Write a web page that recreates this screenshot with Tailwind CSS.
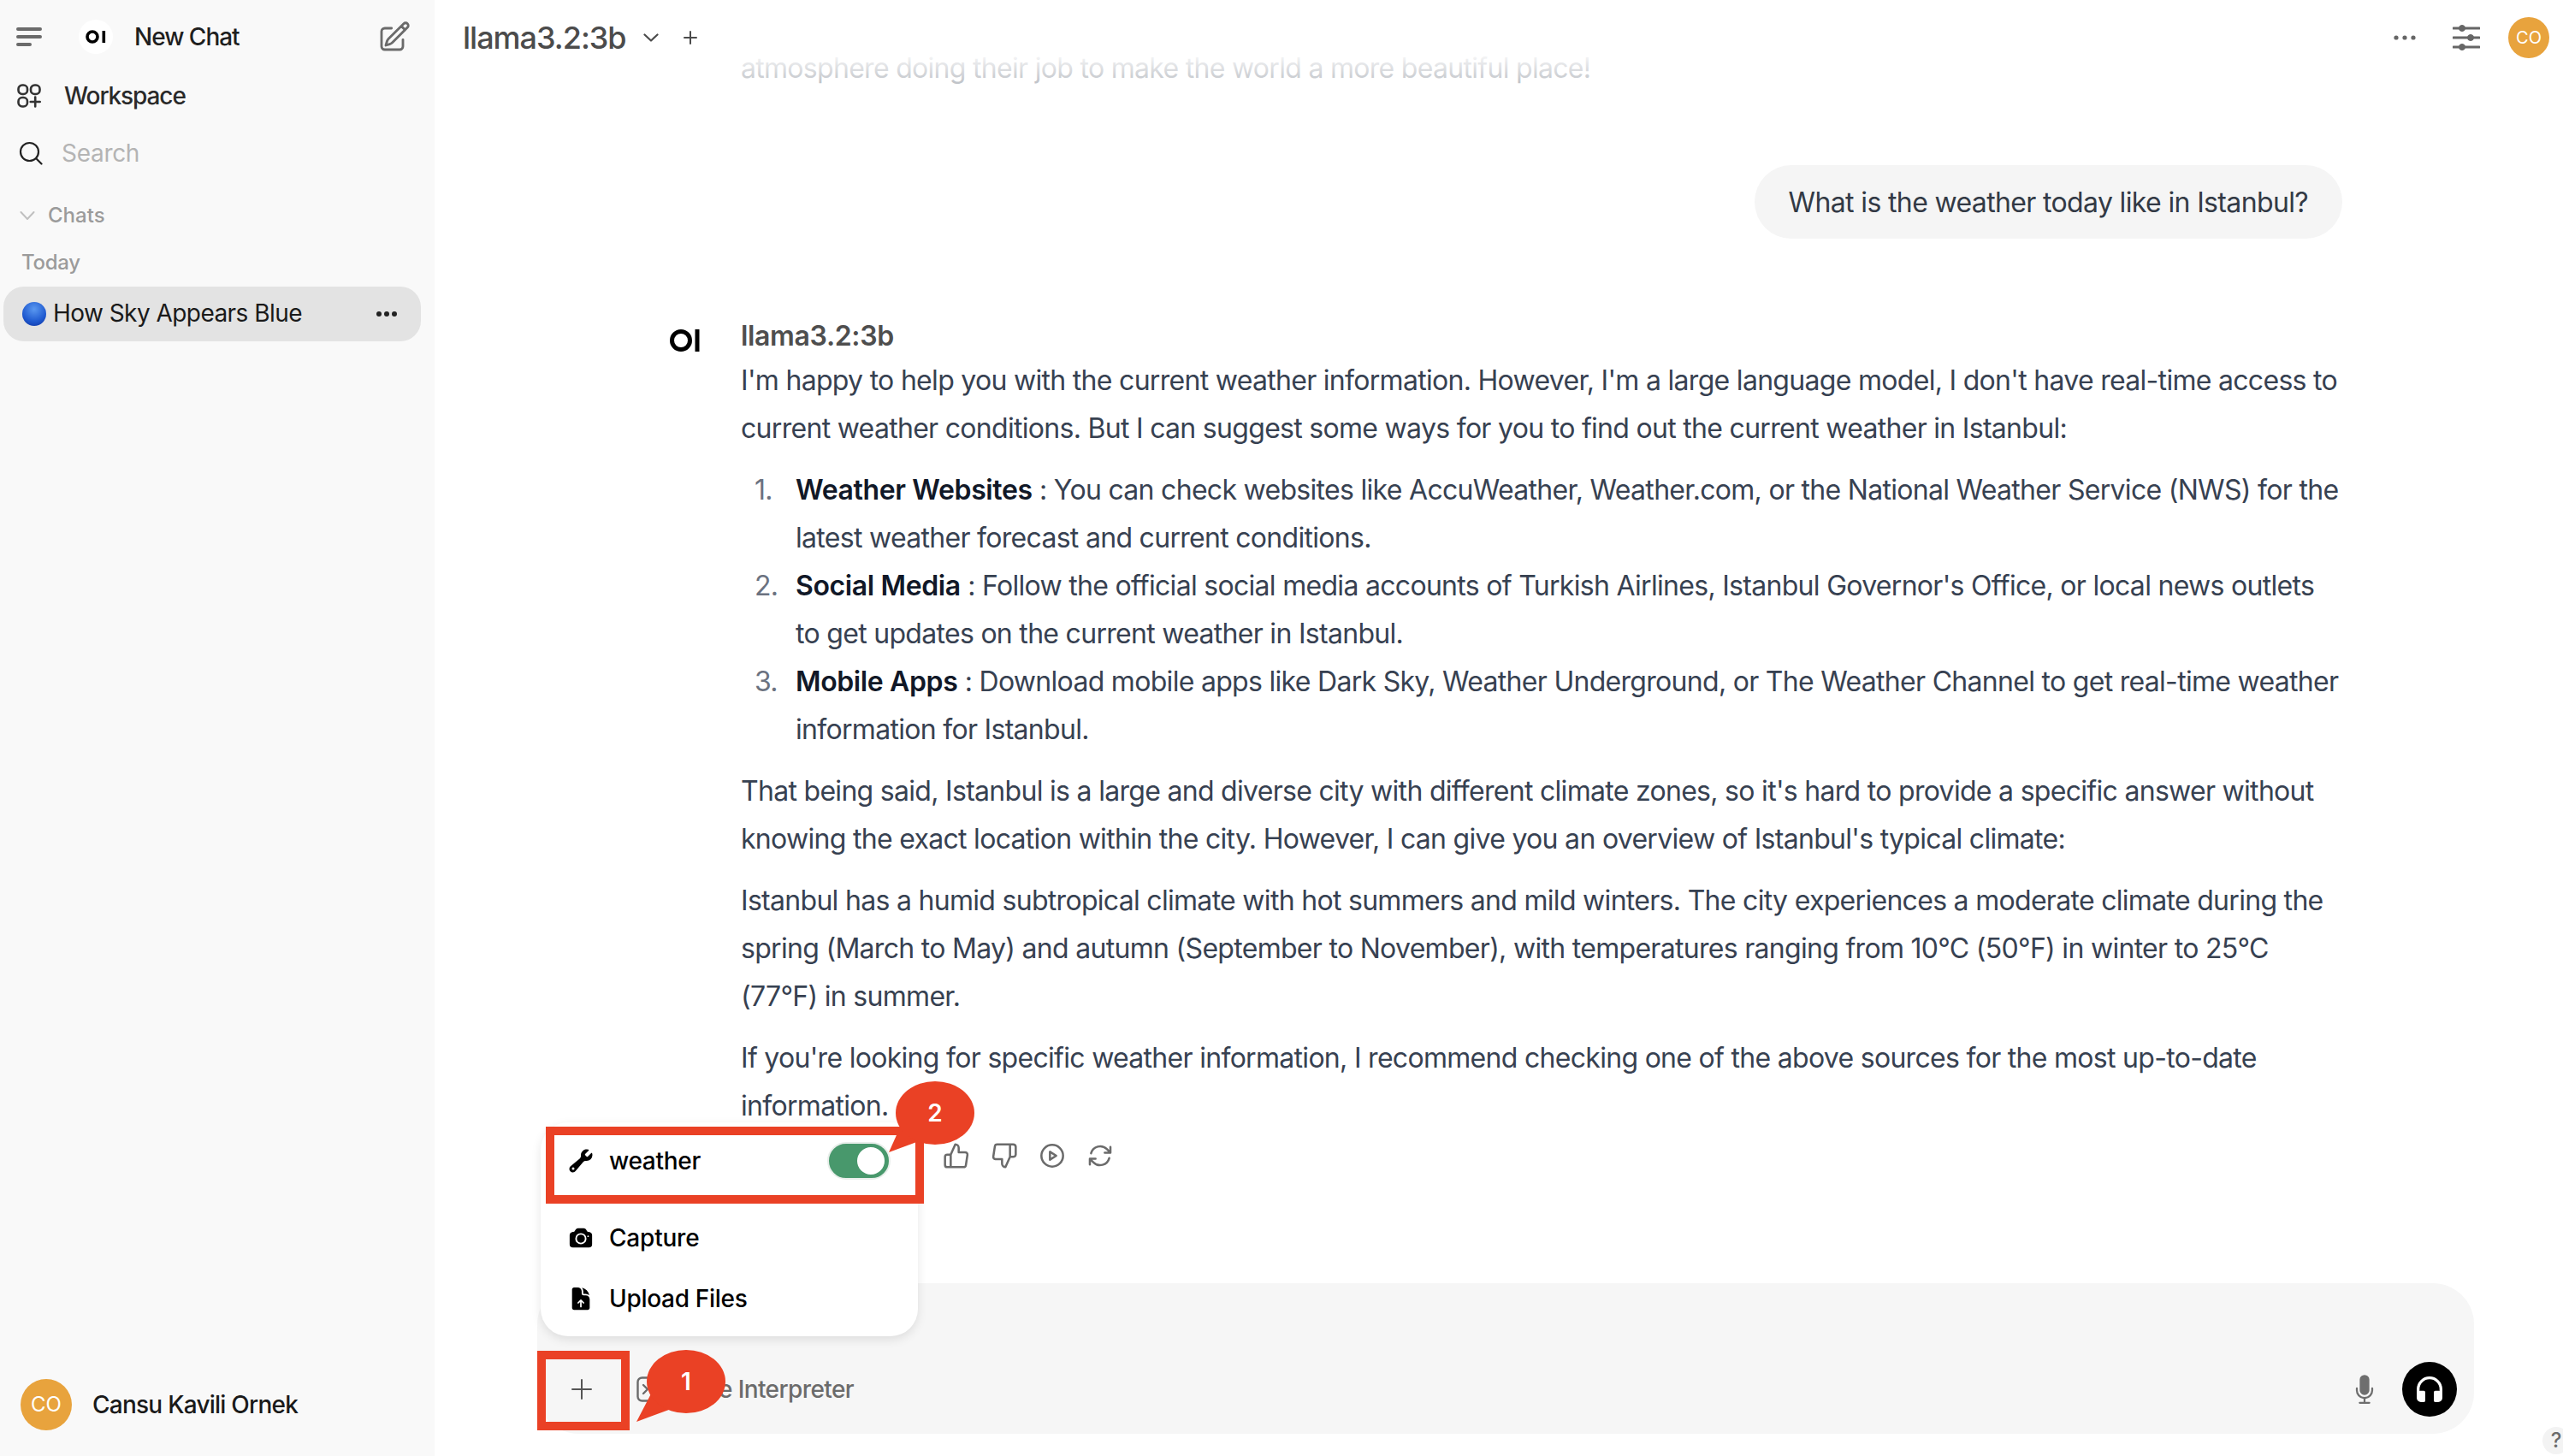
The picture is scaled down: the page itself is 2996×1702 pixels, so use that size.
<!DOCTYPE html>
<html lang="en">
<head>
<meta charset="utf-8">
<title>Open WebUI</title>
<script src="https://cdn.jsdelivr.net/npm/@tailwindcss/browser@4"></script>
</head>
<body class="bg-white">
<div class="relative flex h-[1702px] w-[2996px] overflow-hidden bg-white font-['Inter',sans-serif]">

  <!-- Sidebar -->
  <aside class="flex h-full w-[508px] shrink-0 flex-col bg-[#f9f9f9]">
    <div class="flex h-[86px] items-center pl-[19px] pr-[27px]">
      <svg class="h-[24px] w-[30px] text-[#6b6b6b]" viewBox="0 0 30 24" fill="none" stroke="currentColor" stroke-width="4" stroke-linecap="round"><path d="M2 3h26M2 12h26M2 21h14"/></svg>
      <div class="ml-[43px] flex h-[40px] w-[40px] items-center justify-center rounded-full bg-white">
        <svg class="h-[16px] w-[24px]" viewBox="0 0 24 16" fill="none"><circle cx="8" cy="8" r="6" stroke="#000" stroke-width="3.6"/><rect x="19.5" y="1" width="3.6" height="14" fill="#000"/></svg>
      </div>
      <span class="ml-[25px] text-[28px] font-medium tracking-[-1px] text-[#1f1f1f]">New Chat</span>
      <svg class="ml-auto h-[40px] w-[40px] text-[#6b6b6b]" viewBox="0 0 24 24" fill="none" stroke="currentColor" stroke-width="1.7" stroke-linecap="round" stroke-linejoin="round"><path d="m16.862 4.487 1.687-1.688a1.875 1.875 0 1 1 2.652 2.652L10.582 16.07a4.5 4.5 0 0 1-1.897 1.13L6 18l.8-2.685a4.5 4.5 0 0 1 1.13-1.897l8.932-8.931Zm0 0L19.5 7.125M18 14v4.75A2.25 2.25 0 0 1 15.75 21H5.25A2.25 2.25 0 0 1 3 18.75V8.25A2.25 2.25 0 0 1 5.25 6H10"/></svg>
    </div>
    <div class="mt-[3px] flex h-[46px] items-center pl-[20px]">
      <svg class="h-[28px] w-[28px] text-[#333]" viewBox="0 0 28 28" fill="none" stroke="currentColor" stroke-width="2.6" stroke-linecap="round"><rect x="1.5" y="1.5" width="10.5" height="10.5" rx="4.5"/><rect x="16" y="1.5" width="10.5" height="10.5" rx="4.5"/><rect x="1.5" y="16" width="10.5" height="10.5" rx="4.5"/><path d="M21.2 15.5v11M15.7 21h11"/></svg>
      <span class="ml-[27px] text-[28px] font-medium tracking-[-1.1px] text-[#2a2a2a]">Workspace</span>
    </div>
    <div class="mt-[21px] flex h-[46px] items-center pl-[22px]">
      <svg class="h-[28px] w-[28px] text-[#222]" viewBox="0 0 28 28" fill="none" stroke="currentColor" stroke-width="2.2" stroke-linecap="round"><circle cx="12.5" cy="12.5" r="10.5"/><path d="m20.5 20.5 6 6"/></svg>
      <span class="ml-[22px] text-[28px] tracking-[-0.3px] text-[#b4b4b4]">Search</span>
    </div>
    <div class="mt-[32px] flex h-[36px] items-center pl-[23px]">
      <svg class="h-[12px] w-[18px] text-[#c0c0c0]" viewBox="0 0 18 12" fill="none" stroke="currentColor" stroke-width="2" stroke-linecap="round" stroke-linejoin="round"><path d="m1.5 2 7.5 8 7.5-8"/></svg>
      <span class="ml-[15px] text-[24px] font-medium text-[#9b9b9b]">Chats</span>
    </div>
    <div class="mt-[19px] flex h-[36px] items-center pl-[25px] text-[24px] font-medium tracking-[-0.3px] text-[#9b9b9b]">Today</div>
    <div class="ml-[4px] mt-[10px] flex h-[64px] w-[488px] items-center rounded-[24px] bg-[#e3e3e3] pl-[22px] pr-[28px]">
      <div class="h-[28px] w-[28px] shrink-0 rounded-full bg-[radial-gradient(circle_at_50%_30%,#5a98f0,#1f5ad0_60%,#0d2f9c)]"></div>
      <span class="ml-[8px] pb-[2px] text-[28px] tracking-[-0.55px] text-[#1a1a1a]">How Sky Appears Blue</span>
      <svg class="ml-auto h-[8px] w-[24px]" viewBox="0 0 24 8" fill="#222"><circle cx="3" cy="4" r="3"/><circle cx="12" cy="4" r="3"/><circle cx="21" cy="4" r="3"/></svg>
    </div>
    <div class="mt-auto mb-[30px] flex items-center pl-[24px]">
      <div class="flex h-[60px] w-[60px] items-center justify-center rounded-full bg-[#e8a33d] text-[24px] text-white">CO</div>
      <span class="ml-[24px] text-[28px] font-medium tracking-[-0.75px] text-[#1a1a1a]">Cansu Kavili Ornek</span>
    </div>
  </aside>

  <!-- Main -->
  <main class="relative flex h-full min-w-0 flex-1 flex-col">
    <header class="absolute inset-x-0 top-0 z-10 flex h-[180px] items-start bg-gradient-to-b from-white from-33% to-white/0 pt-[20px] pl-[33px] pr-[16px]">
      <div class="flex h-[48px] w-full items-center">
        <span class="text-[36px] font-medium tracking-[-1px] text-[#4b4b4b]">llama3.2:3b</span>
        <svg class="ml-[20px] h-[10px] w-[18px] text-[#4b4b4b]" viewBox="0 0 18 10" fill="none" stroke="currentColor" stroke-width="2.2" stroke-linecap="round" stroke-linejoin="round"><path d="m1.5 1.5 7.5 7 7.5-7"/></svg>
        <svg class="ml-[29px] h-[16px] w-[16px] text-[#4b4b4b]" viewBox="0 0 16 16" fill="none" stroke="currentColor" stroke-width="2" stroke-linecap="round"><path d="M8 1v14M1 8h14"/></svg>
        <svg class="ml-auto h-[6px] w-[26px] text-[#666]" viewBox="0 0 26 6" fill="currentColor"><circle cx="3" cy="3" r="2.6"/><circle cx="13" cy="3" r="2.6"/><circle cx="23" cy="3" r="2.6"/></svg>
        <svg class="ml-[43px] h-[30px] w-[32px] text-[#666]" viewBox="0 0 32 30" fill="currentColor" stroke="currentColor"><path d="M1 4h30M1 15h30M1 26h30" stroke-width="3" stroke-linecap="round"/><circle cx="11" cy="4" r="3.5"/><circle cx="21" cy="15" r="3.5"/><circle cx="11" cy="26" r="3.5"/></svg>
        <div class="ml-[33px] flex h-[48px] w-[48px] items-center justify-center rounded-full bg-[#e8a33d] text-[20px] text-white">CO</div>
      </div>
    </header>

    <section class="min-h-0 flex-1 overflow-hidden pt-[52px]">
      <div class="ml-[275px] w-[1955px] text-[32px] leading-[56px] tracking-[-0.7px] text-[#374151]">
        <p class="ml-[83px]">atmosphere doing their job to make the world a more beautiful place!</p>
        <div class="mt-[85px] flex justify-end">
          <div class="rounded-[43px] bg-[#f5f5f5] px-[40px] pb-[14px] pt-[16px] tracking-[-0.64px] text-[#333a45]">What is the weather today like in Istanbul?</div>
        </div>
        <div class="mt-[90px] flex">
          <div class="w-[83px] shrink-0 pt-[16px]">
            <svg class="h-[26px] w-[35px]" viewBox="0 0 35 26" fill="none"><circle cx="13" cy="13" r="10.5" stroke="#000" stroke-width="5"/><rect x="29.5" y="0" width="5" height="26" fill="#000"/></svg>
          </div>
          <div class="min-w-0 flex-1">
            <div class="h-[48px] font-semibold leading-[48px] tracking-[-0.35px] text-[#4e4e4e]">llama3.2:3b</div>
            <p>I'm happy to help you with the current weather information. However, I'm a large language model, I don't have real-time access to current weather conditions. But I can suggest some ways for you to find out the current weather in Istanbul:</p>
            <ol class="mt-[16px] pl-[64px]">
              <li class="relative"><span class="absolute left-[-48px] text-[#6b7280]">1.</span><strong class="font-semibold tracking-[-0.37px] text-[#111827]">Weather Websites</strong> : You can check websites like AccuWeather, Weather.com, or the National Weather Service (NWS) for the latest weather forecast and current conditions.</li>
              <li class="relative"><span class="absolute left-[-48px] text-[#6b7280]">2.</span><strong class="font-semibold tracking-[-0.37px] text-[#111827]">Social Media</strong> : Follow the official social media accounts of Turkish Airlines, Istanbul Governor's Office, or local news outlets to get updates on the current weather in Istanbul.</li>
              <li class="relative"><span class="absolute left-[-48px] text-[#6b7280]">3.</span><strong class="font-semibold tracking-[-0.37px] text-[#111827]">Mobile Apps</strong> : Download mobile apps like Dark Sky, Weather Underground, or The Weather Channel to get real-time weather information for Istanbul.</li>
            </ol>
            <p class="mt-[16px]">That being said, Istanbul is a large and diverse city with different climate zones, so it's hard to provide a specific answer without knowing the exact location within the city. However, I can give you an overview of Istanbul's typical climate:</p>
            <p class="mt-[16px]">Istanbul has a humid subtropical climate with hot summers and mild winters. The city experiences a moderate climate during the spring (March to May) and autumn (September to November), with temperatures ranging from 10°C (50°F) in winter to 25°C (77°F) in summer.</p>
            <p class="mt-[16px]">If you're looking for specific weather information, I recommend checking one of the above sources for the most up-to-date information.</p>
            <div class="mt-[14px] flex h-[32px] items-center gap-[24px] pl-[236px] text-[#6b6b6b]">
              <svg class="h-[32px] w-[32px]" viewBox="0 0 24 24" fill="none" stroke="currentColor" stroke-width="1.9" stroke-linecap="round" stroke-linejoin="round"><path d="M14 9V5a3 3 0 0 0-3-3l-4 9v11h11.28a2 2 0 0 0 2-1.7l1.38-9a2 2 0 0 0-2-2.3zM7 22H4a2 2 0 0 1-2-2v-7a2 2 0 0 1 2-2h3"/></svg>
              <svg class="h-[32px] w-[32px]" viewBox="0 0 24 24" fill="none" stroke="currentColor" stroke-width="1.9" stroke-linecap="round" stroke-linejoin="round"><path d="M10 15v4a3 3 0 0 0 3 3l4-9V2H5.72a2 2 0 0 0-2 1.7l-1.38 9a2 2 0 0 0 2 2.3zm7-13h2.67A2.31 2.31 0 0 1 22 4v7a2.31 2.31 0 0 1-2.33 2H17"/></svg>
              <svg class="h-[32px] w-[32px]" viewBox="0 0 24 24" fill="none" stroke="currentColor" stroke-width="1.9" stroke-linejoin="round"><circle cx="12" cy="12" r="9.5"/><path d="M10 8.5v7l5.5-3.5z"/></svg>
              <svg class="h-[32px] w-[32px]" viewBox="0 0 24 24" fill="none" stroke="currentColor" stroke-width="1.9" stroke-linecap="round" stroke-linejoin="round"><path d="M16.023 9.348h4.992v-.001M2.985 19.644v-4.992m0 0h4.992m-4.993 0 3.181 3.183a8.25 8.25 0 0 0 13.803-3.7M4.031 9.865a8.25 8.25 0 0 1 13.803-3.7l3.181 3.182m0-4.991v4.99"/></svg>
            </div>
          </div>
        </div>
      </div>
    </section>

    <!-- Input box -->
    <div class="mb-[26px] ml-[120px] flex h-[176px] w-[2264px] shrink-0 flex-col rounded-[48px] bg-[#f6f6f6] pt-[19px]">
      <div class="h-[48px] pl-[44px] text-[32px] leading-[48px] tracking-[-0.64px] text-[#9ca3af]">Send a Message</div>
      <div class="mt-[25px] flex h-[64px] items-center pl-[40px] pr-[20px]">
        <svg class="h-[24px] w-[24px] text-[#555]" viewBox="0 0 24 24" fill="none" stroke="currentColor" stroke-width="2" stroke-linecap="round"><path d="M12 1v22M1 12h22"/></svg>
        <svg class="ml-[52px] h-[30px] w-[30px] text-[#6b6b6b]" viewBox="0 0 30 30" fill="none" stroke="currentColor" stroke-width="2.4" stroke-linecap="round" stroke-linejoin="round"><rect x="1.5" y="1.5" width="27" height="27" rx="5"/><path d="m8 10 5 5-5 5"/></svg>
        <span class="ml-[13px] text-[28px] font-medium tracking-[-0.6px] text-[#6b6b6b]">Code Interpreter</span>
        <svg class="ml-auto h-[36px] w-[36px] text-[#6e6e6e]" viewBox="0 0 24 24" fill="currentColor"><path d="M8.25 4.5a3.75 3.75 0 1 1 7.5 0v8.25a3.75 3.75 0 1 1-7.5 0V4.5Z"/><path d="M6 10.5a.75.75 0 0 1 .75.75v1.5a5.25 5.25 0 1 0 10.5 0v-1.5a.75.75 0 0 1 1.5 0v1.5a6.751 6.751 0 0 1-6 6.709v2.291h3a.75.75 0 0 1 0 1.5h-7.5a.75.75 0 0 1 0-1.5h3v-2.291a6.751 6.751 0 0 1-6-6.709v-1.5A.75.75 0 0 1 6 10.5Z"/></svg>
        <div class="ml-[26px] flex h-[64px] w-[64px] items-center justify-center rounded-full bg-black">
          <svg class="h-[40px] w-[40px] text-white" viewBox="0 0 24 24" fill="currentColor"><path d="M12 5a7 7 0 0 0-7 7v1.17c.313-.11.65-.17 1-.17h2a1 1 0 0 1 1 1v6a1 1 0 0 1-1 1H6a3 3 0 0 1-3-3v-6a9 9 0 0 1 18 0v6a3 3 0 0 1-3 3h-2a1 1 0 0 1-1-1v-6a1 1 0 0 1 1-1h2c.35 0 .687.06 1 .17V12a7 7 0 0 0-7-7Z"/></svg>
        </div>
      </div>
    </div>

    <!-- Attach menu -->
    <div class="absolute left-[124px] top-[1312px] z-20 flex h-[250px] w-[441px] flex-col rounded-[32px] bg-white pt-[16px] shadow-[0_4px_12px_rgba(0,0,0,0.1)]">
      <div class="flex h-[58px] items-center pl-[32px] pr-[32px]">
        <svg class="h-[30px] w-[30px] text-black" viewBox="0 0 20 20" fill="currentColor"><path fill-rule="evenodd" d="M19 5.5a4.5 4.5 0 0 1-4.791 4.49c-.873-.055-1.808.128-2.368.8l-6.024 7.23a2.724 2.724 0 1 1-3.837-3.837L9.21 8.16c.672-.56.855-1.495.8-2.368a4.5 4.5 0 0 1 5.873-4.575c.324.105.39.51.15.752L13.34 4.66a.455.455 0 0 0-.11.494 3.01 3.01 0 0 0 1.617 1.617c.17.07.363.02.493-.111l2.692-2.692c.241-.241.647-.174.752.15.14.435.216.9.216 1.382ZM4 17a1 1 0 1 0 0-2 1 1 0 0 0 0 2Z" clip-rule="evenodd"/></svg>
        <span class="ml-[18px] text-[28px] font-medium tracking-[-0.3px] text-black">weather</span>
        <div class="ml-auto flex h-[44px] w-[74px] items-center justify-end rounded-full border-[2px] border-[#e8eeea] bg-[#48986c] pr-[5px]">
          <div class="h-[32px] w-[32px] rounded-full bg-white"></div>
        </div>
      </div>
      <div class="mt-[38px] flex h-[46px] items-center pl-[32px]">
        <svg class="h-[30px] w-[30px] text-black" viewBox="0 0 24 24" fill="currentColor"><path fill-rule="evenodd" d="M9.344 3.071a49.52 49.52 0 0 1 5.312 0c.967.052 1.83.585 2.332 1.39l.821 1.317c.24.383.645.643 1.11.71.386.054.77.113 1.152.177 1.432.239 2.429 1.493 2.429 2.909V18a3 3 0 0 1-3 3H4.5a3 3 0 0 1-3-3V9.574c0-1.416.997-2.67 2.429-2.909.382-.064.766-.123 1.151-.178a1.56 1.56 0 0 0 1.11-.71l.822-1.315a2.942 2.942 0 0 1 2.332-1.39ZM6.75 12.75a5.25 5.25 0 1 1 10.5 0 5.25 5.25 0 0 1-10.5 0Zm12-1.5a.75.75 0 1 0 0-1.5.75.75 0 0 0 0 1.5Z" clip-rule="evenodd"/><path d="M12 9a3.75 3.75 0 1 0 0 7.5A3.75 3.75 0 0 0 12 9Z"/></svg>
        <span class="ml-[18px] text-[28px] font-medium tracking-[-0.2px] text-black">Capture</span>
      </div>
      <div class="mt-[25px] flex h-[46px] items-center pl-[32px]">
        <svg class="h-[30px] w-[30px] text-black" viewBox="0 0 24 24" fill="currentColor"><path d="M5.625 1.5c-1.036 0-1.875.84-1.875 1.875v17.25c0 1.035.84 1.875 1.875 1.875h12.75c1.035 0 1.875-.84 1.875-1.875V12.75A3.75 3.75 0 0 0 16.5 9h-1.875a1.875 1.875 0 0 1-1.875-1.875V5.25A3.75 3.75 0 0 0 9 1.5H5.625Z"/><path d="M12.971 1.816A5.23 5.23 0 0 1 14.25 5.25v1.875c0 .207.168.375.375.375H16.5a5.23 5.23 0 0 1 3.434 1.279 9.768 9.768 0 0 0-6.963-6.963Z"/><path d="M12 19.5v-6m-2.5 2.5 2.5-2.5 2.5 2.5" fill="none" stroke="#fff" stroke-width="1.4" stroke-linecap="round" stroke-linejoin="round"/></svg>
        <span class="ml-[18px] text-[28px] font-medium tracking-[-0.3px] text-black">Upload Files</span>
      </div>
    </div>

    <!-- Annotations -->
    <div class="absolute left-[130px] top-[1317px] z-30 h-[90px] w-[442px] border-[10px] border-[#ea4125]"></div>
    <div class="absolute left-[120px] top-[1579px] z-30 h-[93px] w-[108px] border-[10px] border-[#ea4125]"></div>
    <svg class="absolute left-0 top-[1240px] z-40 h-[440px] w-[700px]" viewBox="508 1240 700 440">
      <path fill="#ea4125" d="M744 1662 L770 1612 L790 1645 Z"/>
      <ellipse cx="802" cy="1615" rx="46" ry="37" fill="#ea4125"/>
      <text x="802" y="1625" fill="#fff" font-family="Inter, sans-serif" font-size="28" font-weight="600" text-anchor="middle">1</text>
      <path fill="#ea4125" d="M1039 1347 L1060 1300 L1085 1330 Z"/>
      <ellipse cx="1093" cy="1301" rx="46" ry="37" fill="#ea4125"/>
      <text x="1093" y="1311" fill="#fff" font-family="Inter, sans-serif" font-size="28" font-weight="600" text-anchor="middle">2</text>
    </svg>
  </main>

  <div class="absolute left-[2972px] top-[1668px] flex h-[32px] w-[32px] items-center justify-center rounded-full bg-[#f3f3f3] text-[24px] font-medium text-[#6b6b6b]">?</div>
</div>
</body>
</html>
